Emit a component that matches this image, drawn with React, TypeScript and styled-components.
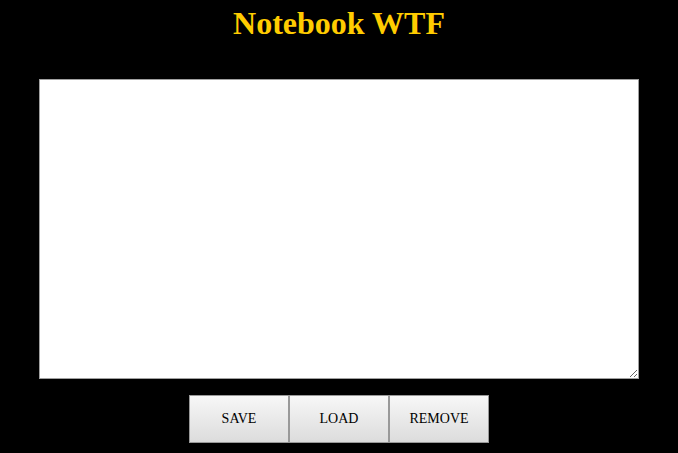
import styled, { createGlobalStyle } from 'styled-components';

const GlobalStyle = createGlobalStyle`
  html, body {
    margin: 0;
    padding: 0;
    background: #000;
  }
`;

const Page = styled.div`
  display: flex;
  flex-direction: column;
  align-items: center;
  font-family: "Liberation Serif", "Times New Roman", serif;
`;

const Title = styled.h1`
  margin: 5px 0 0;
  font-size: 32px;
  font-weight: bold;
  color: #ffcc00;
  line-height: 37px;
`;

const Editor = styled.textarea`
  box-sizing: border-box;
  margin-top: 37px;
  width: 600px;
  height: 300px;
  border: 1px solid #a0a0a0;
  background: #fff;
  padding: 2px;
  font-family: "Liberation Mono", monospace;
  font-size: 13px;
  outline: none;
`;

const ButtonRow = styled.div`
  display: flex;
  margin-top: 16px;
`;

const ActionButton = styled.button`
  box-sizing: border-box;
  width: 100px;
  height: 48px;
  border: 1px solid #999;
  background: linear-gradient(to bottom, #f7f7f7, #dcdcdc);
  font-family: "Liberation Serif", "Times New Roman", serif;
  font-size: 14px;
  color: #000;
  cursor: pointer;
  padding: 0;
`;

export default function App() {
  return (
    <>
      <GlobalStyle />
      <Page>
        <Title>Notebook WTF</Title>
        <Editor />
        <ButtonRow>
          <ActionButton>SAVE</ActionButton>
          <ActionButton>LOAD</ActionButton>
          <ActionButton>REMOVE</ActionButton>
        </ButtonRow>
      </Page>
    </>
  );
}
